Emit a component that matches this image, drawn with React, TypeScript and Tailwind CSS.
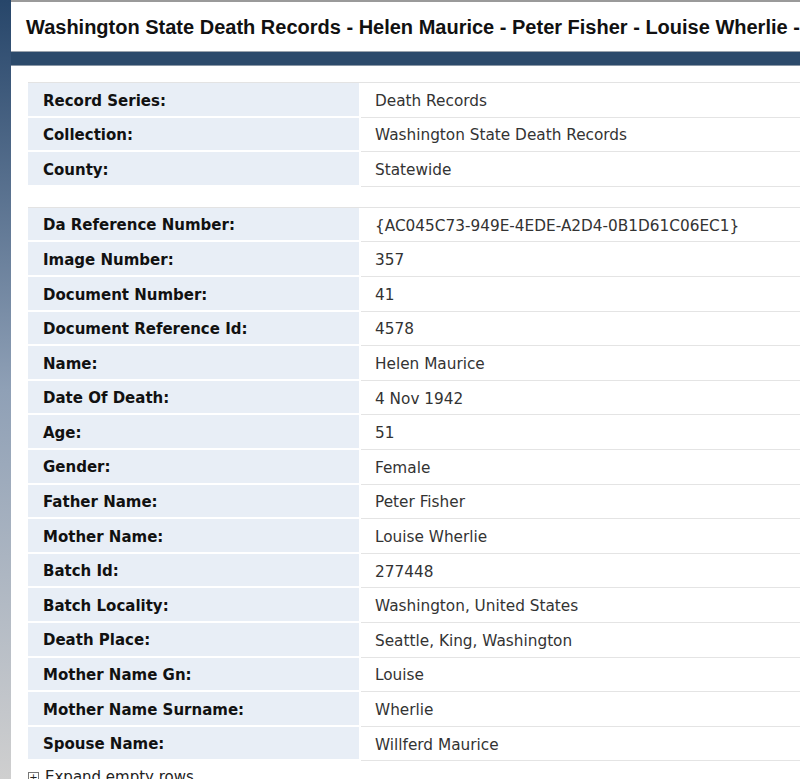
const general: [string, string][] = [
  ["Record Series:", "Death Records"],
  ["Collection:", "Washington State Death Records"],
  ["County:", "Statewide"],
]

const details: [string, string][] = [
  ["Da Reference Number:", "{AC045C73-949E-4EDE-A2D4-0B1D61C06EC1}"],
  ["Image Number:", "357"],
  ["Document Number:", "41"],
  ["Document Reference Id:", "4578"],
  ["Name:", "Helen Maurice"],
  ["Date Of Death:", "4 Nov 1942"],
  ["Age:", "51"],
  ["Gender:", "Female"],
  ["Father Name:", "Peter Fisher"],
  ["Mother Name:", "Louise Wherlie"],
  ["Batch Id:", "277448"],
  ["Batch Locality:", "Washington, United States"],
  ["Death Place:", "Seattle, King, Washington"],
  ["Mother Name Gn:", "Louise"],
  ["Mother Name Surname:", "Wherlie"],
  ["Spouse Name:", "Willferd Maurice"],
]

const RecordTable = ({ rows }: { rows: [string, string][] }) => (
  <div className="border-t border-[#e3e3e3] shrink-0">
    {rows.map(([label, value]) => (
      <div key={label} className="flex h-[34.6px] shrink-0 border-b-2 border-white">
        <div className="w-[333px] shrink-0 bg-[#e8eef6] pl-[15px] pt-[3px] flex items-center font-bold text-[15px] text-[#111] border-r-2 border-white">
          {label}
        </div>
        <div className="flex-1 pl-[14px] pt-[3px] flex items-center text-[15.3px] text-[#333] border-b border-[#e4e4e4] -mb-[2px]">
          {value}
        </div>
      </div>
    ))}
  </div>
)

export default function App() {
  return (
    <div className="flex w-[800px] h-[779px] overflow-hidden bg-[#2c4a6b] font-['DejaVu_Sans',Verdana,sans-serif]">
      <div className="w-[11px] shrink-0 bg-gradient-to-b from-[#27466a] via-[#8fa0b6] to-[#cfcfcf]" />
      <div className="flex-1 flex flex-col min-w-0">
        <div className="h-[2px] shrink-0 bg-[#9a9a9a]" />
        <div className="h-[50px] shrink-0 bg-white border-b border-[#9aa3ad] flex items-center pl-[15px] whitespace-nowrap overflow-hidden">
          <h1 className="font-['Liberation_Sans',Arial,sans-serif] font-bold text-[20px] text-[#111]">
            Washington State Death Records - Helen Maurice - Peter Fisher - Louise Wherlie - Willferd Maurice
          </h1>
        </div>
        <div className="h-[14px] shrink-0 bg-[#2c4a6b] border-b border-[#8a97a6]" />
        <div className="flex-1 flex flex-col bg-white pl-[17px] pt-[16px]">
          <RecordTable rows={general} />
          <div className="h-[20px] shrink-0" />
          <RecordTable rows={details} />
          <div className="flex shrink-0 items-center gap-[6px] pt-[5px] text-[#222] text-[15px]">
            <span className="w-[11px] h-[11px] border border-[#777] flex items-center justify-center text-[10px] leading-none">+</span>
            <span>Expand empty rows</span>
          </div>
        </div>
      </div>
    </div>
  )
}
